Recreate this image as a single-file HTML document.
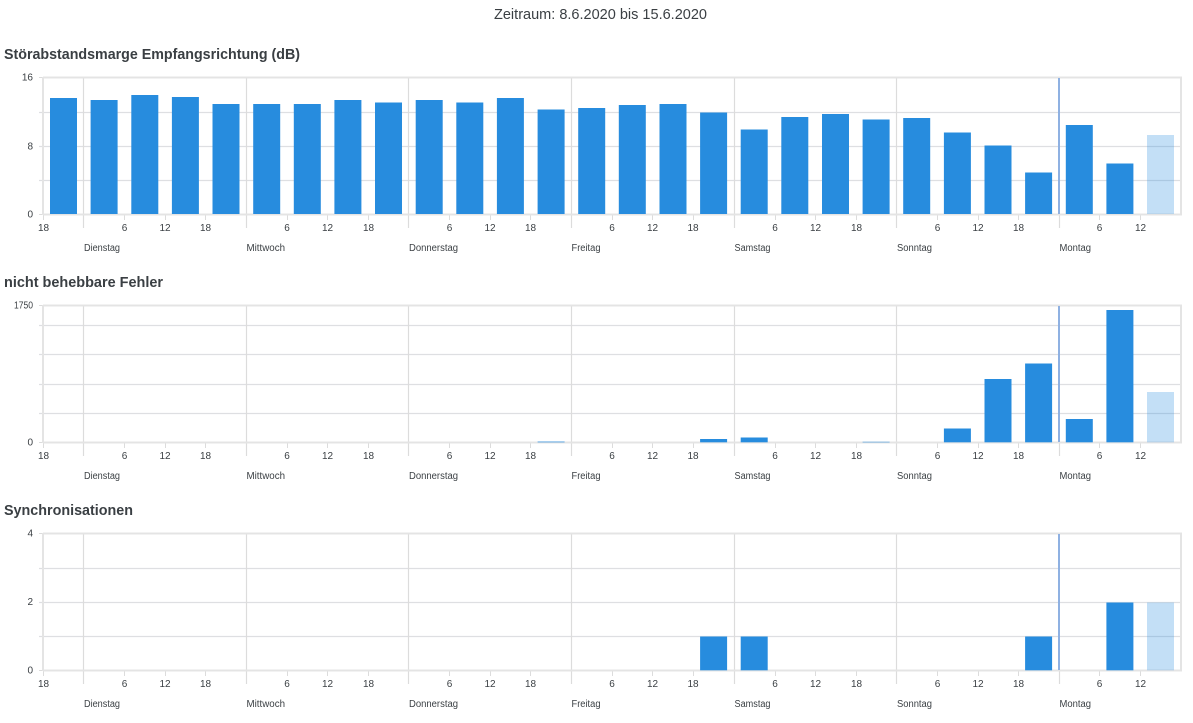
<!DOCTYPE html>
<html lang="de">
<head>
<meta charset="utf-8">
<title>Zeitraum</title>
<style>
html,body{margin:0;padding:0;background:#fff;width:1193px;height:723px;overflow:hidden}
svg{display:block}
text{font-family:"Liberation Sans",sans-serif;fill:#3a3f43}
.h{font-size:14.5px;font-weight:700}
.t{font-size:10px;text-anchor:middle}
.y{font-size:10px;text-anchor:end}
.d{font-size:10px}
.g{stroke:#dedfe2;stroke-width:1.2;fill:none}
.a{stroke:#e4e4e4;stroke-width:2;fill:none}
.v{stroke:#dcdcdc;stroke-width:1.2;fill:none}
.k{stroke:#dcdcdc;stroke-width:1;fill:none}
.m{stroke:#8fb1e2;stroke-width:2;fill:none}
.b{fill:#278cde}
.l{fill:#278cde;fill-opacity:.28}
</style>
</head>
<body>
<svg width="1193" height="723" viewBox="0 0 1193 723" xmlns="http://www.w3.org/2000/svg">
<defs>
<g id="fr">
<path class="v" d="M83.5 78V228M246.5 78V228M408.5 78V228M571.5 78V228M734.5 78V228M896.5 78V228M1059.5 215V228"/>
<path class="k" d="M43.5 215V220M124.5 215V220M165.5 215V220M205.5 215V220M287.5 215V220M327.5 215V220M368.5 215V220M449.5 215V220M490.5 215V220M530.5 215V220M612.5 215V220M652.5 215V220M693.5 215V220M775.5 215V220M815.5 215V220M856.5 215V220M937.5 215V220M978.5 215V220M1018.5 215V220M1099.5 215V220M1140.5 215V220M39 77.5H43M39 214.5H43"/>
<path class="a" d="M43 77.5H1182M43 214.5H1182M43 77V215M1181 77V215"/>
<path class="m" d="M1059 78V214"/>
</g>
</defs>

<text x="600.5" y="19" text-anchor="middle" textLength="213" lengthAdjust="spacingAndGlyphs" style="font-size:14.5px">Zeitraum: 8.6.2020 bis 15.6.2020</text>

<!-- Chart 1 -->
<text class="h" x="4" y="59" textLength="296" lengthAdjust="spacingAndGlyphs">Störabstandsmarge Empfangsrichtung (dB)</text>
<path class="g" d="M39 112.5H1181M39 146.5H1181M39 180.5H1181"/>
<use href="#fr"/>
<text class="y" x="33" y="80.5">16</text>
<text class="y" x="33" y="149.5">8</text>
<text class="y" x="33" y="217.5">0</text>
<g>
<rect class="b" x="50" y="98" width="27" height="116"/>
<rect class="b" x="90.6" y="100" width="27" height="114"/>
<rect class="b" x="131.3" y="95" width="27" height="119"/>
<rect class="b" x="171.9" y="97" width="27" height="117"/>
<rect class="b" x="212.5" y="104" width="27" height="110"/>
<rect class="b" x="253.2" y="104" width="27" height="110"/>
<rect class="b" x="293.8" y="104" width="27" height="110"/>
<rect class="b" x="334.4" y="100" width="27" height="114"/>
<rect class="b" x="375" y="102.5" width="27" height="111.5"/>
<rect class="b" x="415.7" y="100" width="27" height="114"/>
<rect class="b" x="456.3" y="102.5" width="27" height="111.5"/>
<rect class="b" x="496.9" y="98" width="27" height="116"/>
<rect class="b" x="537.6" y="109.5" width="27" height="104.5"/>
<rect class="b" x="578.2" y="108" width="27" height="106"/>
<rect class="b" x="618.8" y="105" width="27" height="109"/>
<rect class="b" x="659.5" y="104" width="27" height="110"/>
<rect class="b" x="700.1" y="112.5" width="27" height="101.5"/>
<rect class="b" x="740.7" y="129.5" width="27" height="84.5"/>
<rect class="b" x="781.3" y="117" width="27" height="97"/>
<rect class="b" x="822" y="114" width="27" height="100"/>
<rect class="b" x="862.6" y="119.5" width="27" height="94.5"/>
<rect class="b" x="903.2" y="118" width="27" height="96"/>
<rect class="b" x="943.9" y="132.5" width="27" height="81.5"/>
<rect class="b" x="984.5" y="145.5" width="27" height="68.5"/>
<rect class="b" x="1025.1" y="172.5" width="27" height="41.5"/>
<rect class="b" x="1065.8" y="125" width="27" height="89"/>
<rect class="b" x="1106.4" y="163.5" width="27" height="50.5"/>
<rect class="l" x="1147" y="135" width="27" height="79"/>
</g>
<g>
<text class="t" x="43.5" y="231">18</text>
<text class="t" x="124.5" y="231">6</text><text class="t" x="165" y="231">12</text><text class="t" x="205.5" y="231">18</text>
<text class="t" x="287" y="231">6</text><text class="t" x="327.5" y="231">12</text><text class="t" x="368.5" y="231">18</text>
<text class="t" x="449.5" y="231">6</text><text class="t" x="490" y="231">12</text><text class="t" x="530.5" y="231">18</text>
<text class="t" x="612" y="231">6</text><text class="t" x="652.5" y="231">12</text><text class="t" x="693" y="231">18</text>
<text class="t" x="775" y="231">6</text><text class="t" x="815.5" y="231">12</text><text class="t" x="856.5" y="231">18</text>
<text class="t" x="937.5" y="231">6</text><text class="t" x="978" y="231">12</text><text class="t" x="1018.5" y="231">18</text>
<text class="t" x="1099.5" y="231">6</text><text class="t" x="1140.5" y="231">12</text>
<text class="d" x="84" y="251" textLength="36" lengthAdjust="spacingAndGlyphs">Dienstag</text>
<text class="d" x="246.5" y="251" textLength="38.5" lengthAdjust="spacingAndGlyphs">Mittwoch</text>
<text class="d" x="409" y="251" textLength="49" lengthAdjust="spacingAndGlyphs">Donnerstag</text>
<text class="d" x="571.5" y="251" textLength="29" lengthAdjust="spacingAndGlyphs">Freitag</text>
<text class="d" x="734.5" y="251" textLength="36" lengthAdjust="spacingAndGlyphs">Samstag</text>
<text class="d" x="897" y="251" textLength="35" lengthAdjust="spacingAndGlyphs">Sonntag</text>
<text class="d" x="1059.5" y="251" textLength="31.5" lengthAdjust="spacingAndGlyphs">Montag</text>
</g>

<!-- Chart 2 -->
<text class="h" x="4" y="287" textLength="159" lengthAdjust="spacingAndGlyphs">nicht behebbare Fehler</text>
<path class="g" d="M39 325.5H1181M39 354.5H1181M39 384.5H1181M39 413.5H1181"/>
<use href="#fr" y="228"/>
<text class="y" x="33" y="308.5" textLength="19" lengthAdjust="spacingAndGlyphs">1750</text>
<text class="y" x="33" y="445.5">0</text>
<g>
<rect class="b" x="537.6" y="441.6" width="27" height=".7"/>
<rect class="b" x="700.1" y="439" width="27" height="3.3"/>
<rect class="b" x="740.7" y="437.5" width="27" height="4.8"/>
<rect class="b" x="862.6" y="441.8" width="27" height=".5"/>
<rect class="b" x="943.9" y="428.5" width="27" height="13.8"/>
<rect class="b" x="984.5" y="379" width="27" height="63.3"/>
<rect class="b" x="1025.1" y="363.5" width="27" height="78.8"/>
<rect class="b" x="1065.8" y="419" width="27" height="23.3"/>
<rect class="b" x="1106.4" y="310" width="27" height="132.3"/>
<rect class="l" x="1147" y="392" width="27" height="50.3"/>
</g>
<g>
<text class="t" x="43.5" y="459">18</text>
<text class="t" x="124.5" y="459">6</text><text class="t" x="165" y="459">12</text><text class="t" x="205.5" y="459">18</text>
<text class="t" x="287" y="459">6</text><text class="t" x="327.5" y="459">12</text><text class="t" x="368.5" y="459">18</text>
<text class="t" x="449.5" y="459">6</text><text class="t" x="490" y="459">12</text><text class="t" x="530.5" y="459">18</text>
<text class="t" x="612" y="459">6</text><text class="t" x="652.5" y="459">12</text><text class="t" x="693" y="459">18</text>
<text class="t" x="775" y="459">6</text><text class="t" x="815.5" y="459">12</text><text class="t" x="856.5" y="459">18</text>
<text class="t" x="937.5" y="459">6</text><text class="t" x="978" y="459">12</text><text class="t" x="1018.5" y="459">18</text>
<text class="t" x="1099.5" y="459">6</text><text class="t" x="1140.5" y="459">12</text>
<text class="d" x="84" y="479" textLength="36" lengthAdjust="spacingAndGlyphs">Dienstag</text>
<text class="d" x="246.5" y="479" textLength="38.5" lengthAdjust="spacingAndGlyphs">Mittwoch</text>
<text class="d" x="409" y="479" textLength="49" lengthAdjust="spacingAndGlyphs">Donnerstag</text>
<text class="d" x="571.5" y="479" textLength="29" lengthAdjust="spacingAndGlyphs">Freitag</text>
<text class="d" x="734.5" y="479" textLength="36" lengthAdjust="spacingAndGlyphs">Samstag</text>
<text class="d" x="897" y="479" textLength="35" lengthAdjust="spacingAndGlyphs">Sonntag</text>
<text class="d" x="1059.5" y="479" textLength="31.5" lengthAdjust="spacingAndGlyphs">Montag</text>
</g>

<!-- Chart 3 -->
<text class="h" x="4" y="515" textLength="129" lengthAdjust="spacingAndGlyphs">Synchronisationen</text>
<path class="g" d="M39 568.5H1181M39 602.5H1181M39 636.5H1181"/>
<use href="#fr" y="456"/>
<text class="y" x="33" y="536.5">4</text>
<text class="y" x="33" y="605">2</text>
<text class="y" x="33" y="673.5">0</text>
<g>
<rect class="b" x="700.1" y="636.5" width="27" height="33.8"/>
<rect class="b" x="740.7" y="636.5" width="27" height="33.8"/>
<rect class="b" x="1025.1" y="636.5" width="27" height="33.8"/>
<rect class="b" x="1106.4" y="602.5" width="27" height="67.8"/>
<rect class="l" x="1147" y="602.5" width="27" height="67.8"/>
</g>
<g>
<text class="t" x="43.5" y="687">18</text>
<text class="t" x="124.5" y="687">6</text><text class="t" x="165" y="687">12</text><text class="t" x="205.5" y="687">18</text>
<text class="t" x="287" y="687">6</text><text class="t" x="327.5" y="687">12</text><text class="t" x="368.5" y="687">18</text>
<text class="t" x="449.5" y="687">6</text><text class="t" x="490" y="687">12</text><text class="t" x="530.5" y="687">18</text>
<text class="t" x="612" y="687">6</text><text class="t" x="652.5" y="687">12</text><text class="t" x="693" y="687">18</text>
<text class="t" x="775" y="687">6</text><text class="t" x="815.5" y="687">12</text><text class="t" x="856.5" y="687">18</text>
<text class="t" x="937.5" y="687">6</text><text class="t" x="978" y="687">12</text><text class="t" x="1018.5" y="687">18</text>
<text class="t" x="1099.5" y="687">6</text><text class="t" x="1140.5" y="687">12</text>
<text class="d" x="84" y="707" textLength="36" lengthAdjust="spacingAndGlyphs">Dienstag</text>
<text class="d" x="246.5" y="707" textLength="38.5" lengthAdjust="spacingAndGlyphs">Mittwoch</text>
<text class="d" x="409" y="707" textLength="49" lengthAdjust="spacingAndGlyphs">Donnerstag</text>
<text class="d" x="571.5" y="707" textLength="29" lengthAdjust="spacingAndGlyphs">Freitag</text>
<text class="d" x="734.5" y="707" textLength="36" lengthAdjust="spacingAndGlyphs">Samstag</text>
<text class="d" x="897" y="707" textLength="35" lengthAdjust="spacingAndGlyphs">Sonntag</text>
<text class="d" x="1059.5" y="707" textLength="31.5" lengthAdjust="spacingAndGlyphs">Montag</text>
</g>
</svg>
</body>
</html>
